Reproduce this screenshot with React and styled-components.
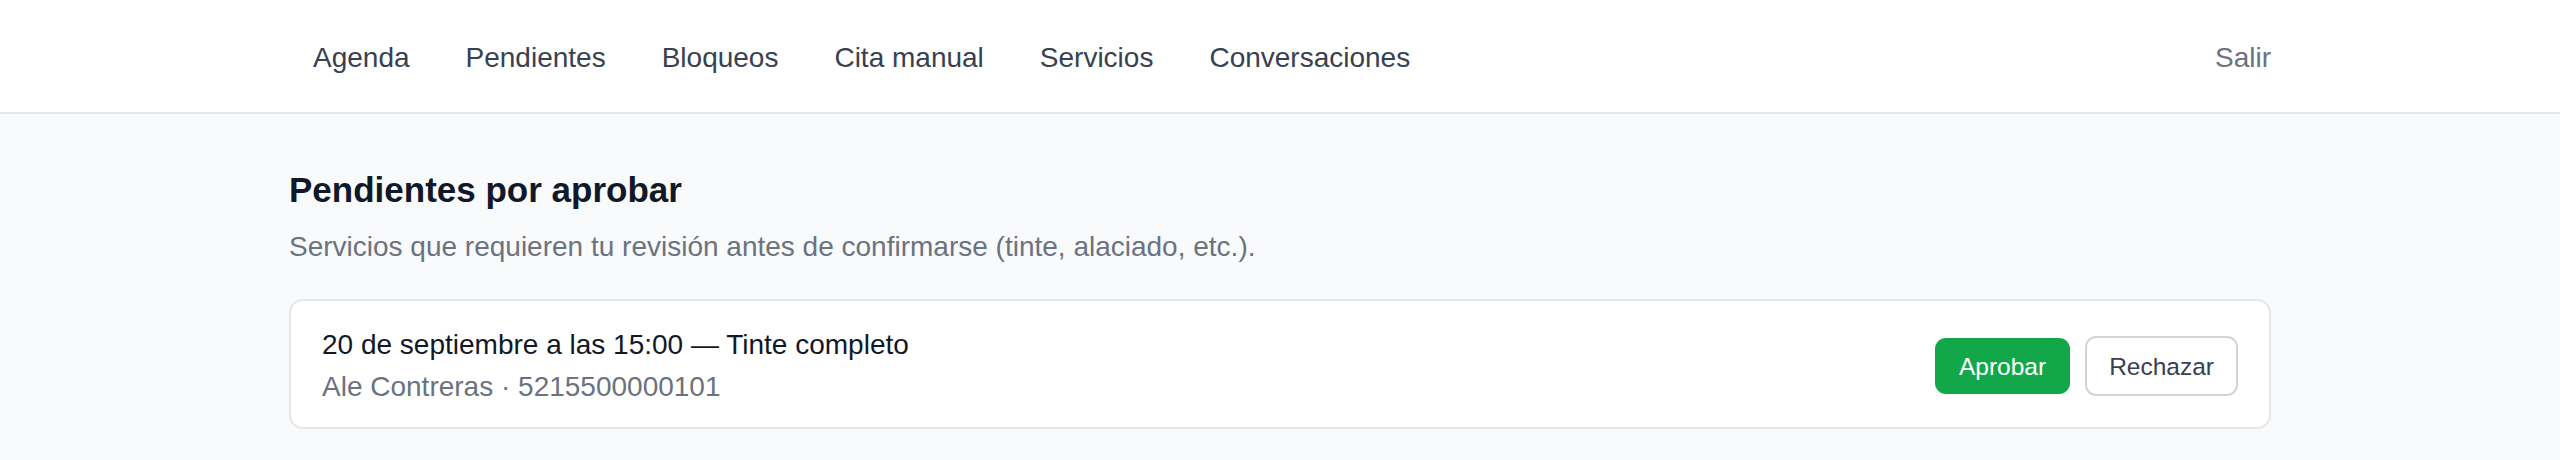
import styled, { createGlobalStyle } from "styled-components";

const GlobalStyle = createGlobalStyle`
  html, body {
    margin: 0;
    padding: 0;
    background: #f9fafb;
    font-family: "Liberation Sans", Arial, sans-serif;
  }
  body {
    min-height: 460px;
  }
`;

const links = ["Agenda", "Pendientes", "Bloqueos", "Cita manual", "Servicios", "Conversaciones"];

const pending = [
  {
    id: 1,
    when: "20 de septiembre a las 15:00",
    service: "Tinte completo",
    client: "Ale Contreras",
    phone: "5215500000101",
  },
];

const Header = styled.header`
  background: #ffffff;
  border-bottom: 2px solid #e5e7eb;
`;

const Bar = styled.div`
  box-sizing: border-box;
  width: 1982px;
  height: 112px;
  padding-top: 3px;
  margin: 0 auto;
  display: flex;
  align-items: center;
  justify-content: space-between;
`;

const Nav = styled.nav`
  display: flex;
  align-items: center;
  gap: 14px;
  padding-left: 3px;
`;

const NavLink = styled.a`
  padding: 0 21px;
  font-size: 28px;
  line-height: 42px;
  color: #374151;
  text-decoration: none;
  cursor: pointer;
`;

const Logout = styled.button`
  border: 0;
  background: none;
  padding: 0;
  font-family: inherit;
  font-size: 28px;
  line-height: 42px;
  color: #6b7280;
  cursor: pointer;
`;

const Main = styled.main`
  width: 1982px;
  margin: 0 auto;
  padding-top: 51px;
`;

const Title = styled.h1`
  margin: 0;
  font-size: 35px;
  line-height: 49px;
  font-weight: 700;
  color: #111827;
`;

const Subtitle = styled.p`
  margin: 12px 0 0;
  font-size: 28px;
  line-height: 42px;
  color: #6b7280;
`;

const List = styled.ul`
  list-style: none;
  margin: 31px 0 0;
  padding: 0;
  display: flex;
  flex-direction: column;
  gap: 21px;
`;

const Card = styled.li`
  display: flex;
  align-items: center;
  justify-content: space-between;
  padding: 23px 31px 19px;
  background: #ffffff;
  border: 2px solid #e5e7eb;
  border-radius: 14px;
`;

const Info = styled.div`
  display: flex;
  flex-direction: column;
`;

const Line = styled.div`
  font-size: 28px;
  line-height: 42px;
  color: ${(p) => (p.$muted ? "#6b7280" : "#111827")};
`;

const Actions = styled.div`
  display: flex;
  align-items: center;
  gap: 15px;
`;

const Button = styled.button`
  box-sizing: border-box;
  height: ${(p) => (p.$primary ? "56px" : "60px")};
  padding: 0 ${(p) => (p.$primary ? "24px" : "22px")};
  font-family: inherit;
  font-size: 24.5px;
  line-height: 35px;
  border-radius: 11px;
  cursor: pointer;
  border: ${(p) => (p.$primary ? "0" : "2px solid #d1d5db")};
  background: ${(p) => (p.$primary ? "#12a84a" : "#ffffff")};
  color: ${(p) => (p.$primary ? "#ffffff" : "#374151")};
`;

export default function App() {
  return (
    <>
      <GlobalStyle />
      <Header>
        <Bar>
          <Nav>
            {links.map((l) => (
              <NavLink key={l}>{l}</NavLink>
            ))}
          </Nav>
          <Logout>Salir</Logout>
        </Bar>
      </Header>
      <Main>
        <Title>Pendientes por aprobar</Title>
        <Subtitle>Servicios que requieren tu revisión antes de confirmarse (tinte, alaciado, etc.).</Subtitle>
        <List>
          {pending.map((item) => (
            <Card key={item.id}>
              <Info>
                <Line>
                  {item.when} — {item.service}
                </Line>
                <Line $muted>
                  {item.client} · {item.phone}
                </Line>
              </Info>
              <Actions>
                <Button $primary>Aprobar</Button>
                <Button>Rechazar</Button>
              </Actions>
            </Card>
          ))}
        </List>
      </Main>
    </>
  );
}
